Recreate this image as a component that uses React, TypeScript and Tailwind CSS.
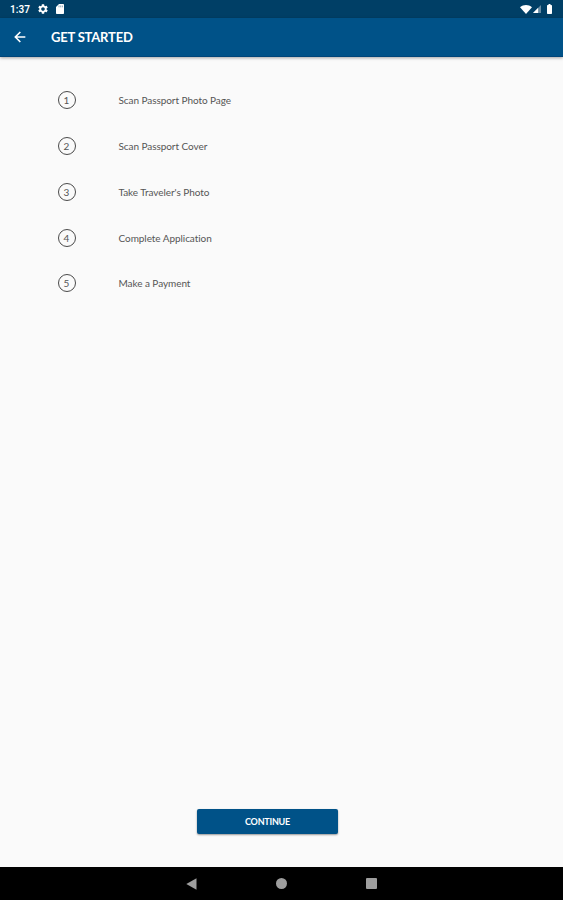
import { MdBatteryFull, MdSettings } from 'react-icons/md'

const steps = [
  'Scan Passport Photo Page',
  'Scan Passport Cover',
  "Take Traveler's Photo",
  'Complete Application',
  'Make a Payment',
]

function StatusBar() {
  return (
    <div className="flex h-[18px] shrink-0 items-center bg-[#003f66] pl-[10px] pr-[7px] text-white">
      <span className="w-[27px] pt-px font-[Roboto,sans-serif] text-[10px] font-semibold leading-none">1:37</span>
      <MdSettings className="size-[12px]" />
      <svg viewBox="0 0 8 10" className="ml-[7px] h-[10px] w-[8px]" fill="currentColor">
        <path d="M3 0h4.2a.8.8 0 0 1 .8.8v8.4a.8.8 0 0 1-.8.8H.8a.8.8 0 0 1-.8-.8V3z" />
        <path d="M3 1.5v1.8M4.7 1.5v1.8M6.4 1.5v1.8" stroke="#5f88a3" strokeWidth=".7" />
      </svg>

      <div className="ml-auto flex items-center">
        <svg viewBox="0 0 12 9" className="h-[9px] w-[12px]" fill="currentColor">
          <path d="M0 2.2C3.5-.7 8.5-.7 12 2.2L6 9z" />
        </svg>
        <svg viewBox="0 0 9 9" className="ml-px h-[8px] w-[8px]" fill="currentColor">
          <path d="M9 0v9H0z" opacity=".4" />
          <path d="M5.8 3.2V9H0z" />
        </svg>
        <MdBatteryFull className="ml-[2px] h-[12px] w-[13px]" />
      </div>
    </div>
  )
}

function AppBar() {
  return (
    <header className="z-10 flex h-[39px] shrink-0 items-center border-b border-[#004579] bg-[#005288] pl-[12px] text-white shadow-[0_1px_3px_rgba(0,0,0,0.35)]">
      <button type="button" aria-label="Back">
        <svg viewBox="0 0 24 24" className="size-[16px]" fill="none" stroke="currentColor" strokeWidth="2.4">
          <path d="M20 12H5M12.5 4.5L5 12l7.5 7.5" />
        </svg>
      </button>
      <h1 className="ml-[23px] font-[Lato,sans-serif] text-[13px] font-bold leading-none tracking-[-0.2px]">
        GET STARTED
      </h1>
    </header>
  )
}

function NavigationBar() {
  return (
    <nav className="flex h-[33px] shrink-0 items-center justify-center gap-[79px] bg-black text-[#9e9e9e]">
      <svg viewBox="0 0 11 12" className="h-[12px] w-[11px]" fill="currentColor">
        <path d="M10.5.3v11.4L.3 6z" />
      </svg>
      <div className="size-[11px] rounded-full bg-[#9e9e9e]" />
      <div className="size-[11px] rounded-[1px] bg-[#9e9e9e]" />
    </nav>
  )
}

export default function App() {
  return (
    <div className="flex h-[900px] w-full flex-col overflow-hidden bg-[#fafafa] font-[Lato,sans-serif]">
      <StatusBar />
      <AppBar />

      <main className="flex flex-1 flex-col">
        <ol className="flex flex-col gap-[27.8px] pl-[57.5px] pt-[34.3px]">
          {steps.map((step, index) => (
            <li key={step} className="flex h-[18px] items-center text-[10px] leading-none text-[#555555]">
              <span className="flex size-[18px] items-center justify-center rounded-full border border-[#4a4a4a] text-[10px]">
                {index + 1}
              </span>
              <span className="ml-[43px] tracking-[-0.06px] [font-variant-ligatures:none]">{step}</span>
            </li>
          ))}
        </ol>

        <button
          type="button"
          className="mb-[33px] ml-[197px] mt-auto h-[25px] w-[141px] rounded-[2px] bg-[#005288] text-[9px] font-bold leading-none tracking-[-0.25px] text-white shadow-[0_1px_2px_rgba(0,0,0,0.4)]"
        >
          CONTINUE
        </button>
      </main>

      <NavigationBar />
    </div>
  )
}
